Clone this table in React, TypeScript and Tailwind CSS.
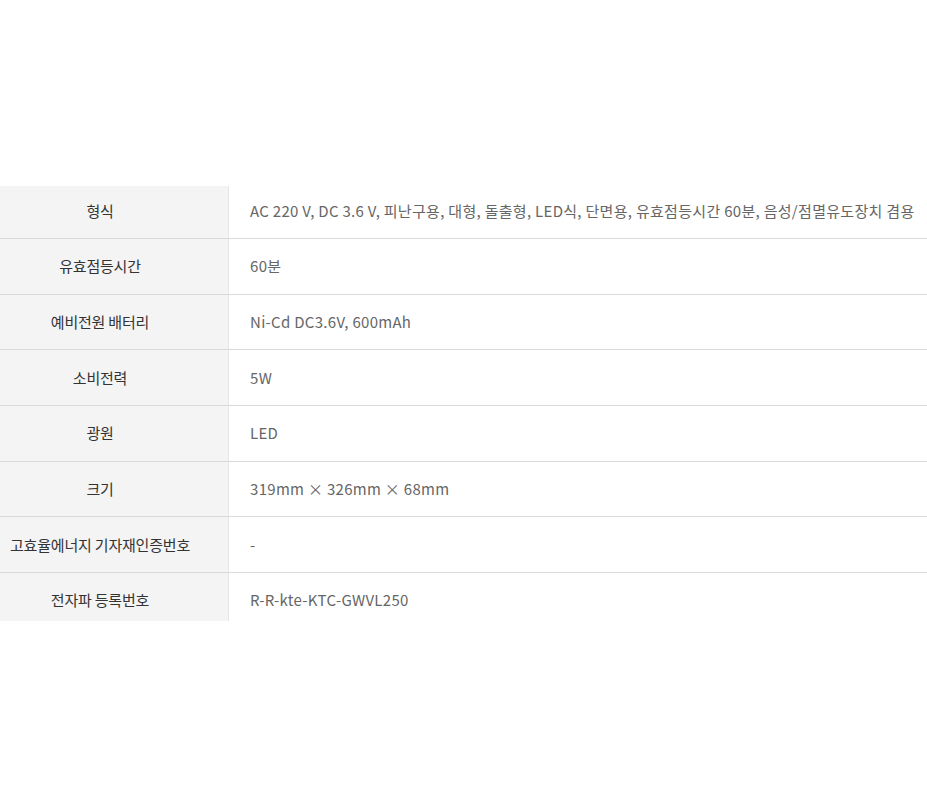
const rows: [string, string][] = [
  ["형식", "AC 220 V, DC 3.6 V, 피난구용, 대형, 돌출형, LED식, 단면용, 유효점등시간 60분, 음성/점멸유도장치 겸용"],
  ["유효점등시간", "60분"],
  ["예비전원 배터리", "Ni-Cd DC3.6V, 600mAh"],
  ["소비전력", "5W"],
  ["광원", "LED"],
  ["크기", "319mm × 326mm × 68mm"],
  ["고효율에너지 기자재인증번호", "-"],
  ["전자파 등록번호", "R-R-kte-KTC-GWVL250"],
];

export default function App() {
  return (
    <div className="w-[927px] h-[808px] bg-white pt-[186px]" style={{fontFamily: '"Noto Sans CJK KR", "Noto Sans", sans-serif'}}>
      {/* table is cut off top and bottom in the source */}
      <div className="w-full h-[435px] overflow-hidden">
        <div className="flex flex-col mt-[-3.5px]">
          {rows.map(([label, value]) => (
            <div key={label} className="flex h-[55.67px] border-t border-[#d9d9d9]">
              <div className="w-[229px] shrink-0 bg-[#f4f4f4] border-r border-[#e6e6e6] flex items-center justify-center pr-[28px] text-[15px] text-[#333] tracking-[-0.2px] whitespace-nowrap">
                {label}
              </div>
              <div className="flex-1 flex items-center pl-[21px] text-[15px] text-[#666] tracking-[0.3px] whitespace-nowrap">
                {value}
              </div>
            </div>
          ))}
        </div>
      </div>
    </div>
  );
}
